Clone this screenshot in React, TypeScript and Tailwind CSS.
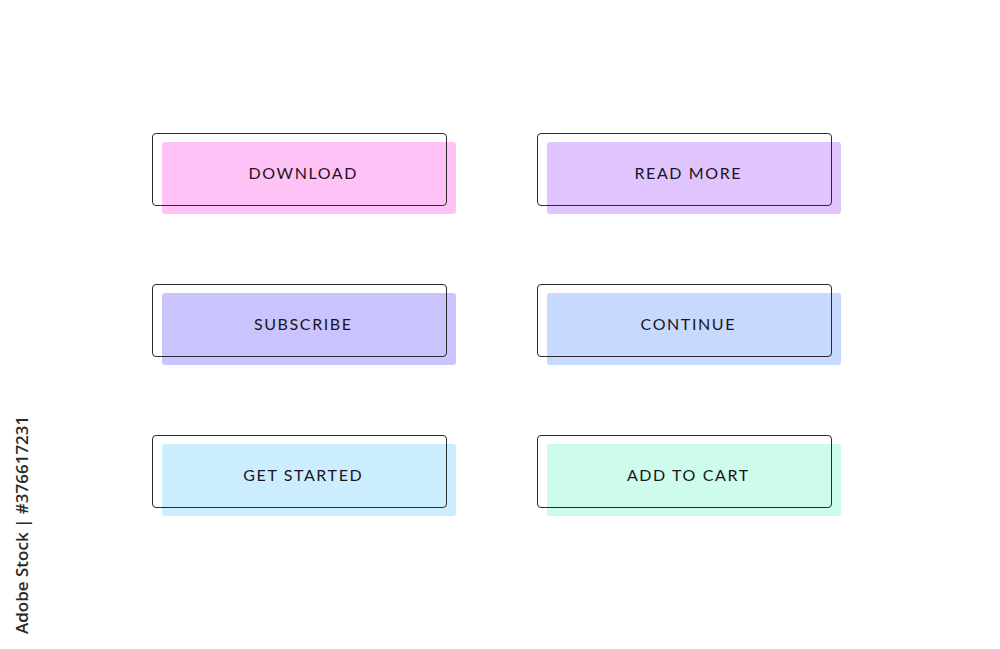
import React from "react";

const buttons = [
  { label: "DOWNLOAD", fill: "bg-[#ffc2f6]" },
  { label: "READ MORE", fill: "bg-[#e0c4fd]" },
  { label: "SUBSCRIBE", fill: "bg-[#c9c4fd]" },
  { label: "CONTINUE", fill: "bg-[#c7d9fd]" },
  { label: "GET STARTED", fill: "bg-[#cbedfd]" },
  { label: "ADD TO CART", fill: "bg-[#cdfcec]" },
];

function OffsetButton({ label, fill }: { label: string; fill: string }) {
  return (
    <div className="relative w-[304px] h-[81px]">
      <div className={`ml-[10px] mt-[9px] w-[294px] h-[72px] rounded-[3px] ${fill}`} />
      <div className="absolute left-0 top-0 w-[295px] h-[73px] rounded-[4px] border-[1.5px] border-[#2a2a2a]" />
      <div className="absolute inset-0 flex items-center justify-center pr-[3px] pb-[1px]">
        <span className="text-[16px] tracking-[0.1em] text-[#1a1520] font-['Lato',sans-serif] pl-[0.1em]">
          {label}
        </span>
      </div>
    </div>
  );
}

export default function App() {
  return (
    <div className="relative w-[1000px] h-[649px] bg-white overflow-hidden">
      <div className="grid grid-cols-[304px_304px] gap-x-[81px] gap-y-[70px] pl-[152px] pt-[133px]">
        {buttons.map((b) => (
          <OffsetButton key={b.label} label={b.label} fill={b.fill} />
        ))}
      </div>
      <div className="absolute left-[12px] top-[634px] origin-top-left -rotate-90 whitespace-nowrap text-[17px] leading-[20px] font-semibold text-[#2a2a2a] font-['Open_Sans',sans-serif]">
        Adobe Stock | #376617231
      </div>
    </div>
  );
}
